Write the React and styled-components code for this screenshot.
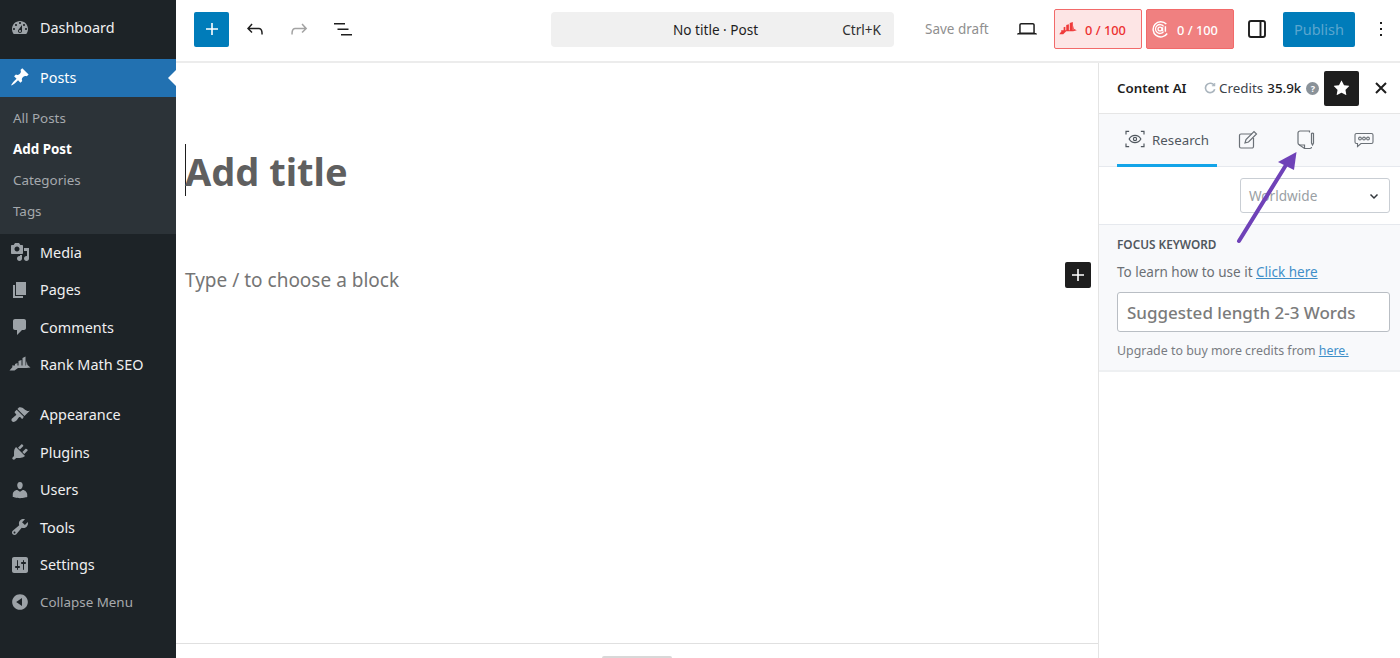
import styled, { createGlobalStyle } from 'styled-components';

const GlobalStyle = createGlobalStyle`
    html, body {
        margin: 0;
        padding: 0;
        background: #fff;
        font-family: 'Noto Sans', 'Open Sans', sans-serif;
    }
    * {
        box-sizing: border-box;
    }
`;

const menuTop = [
    {
        label: 'Media',
        d: 'M13 11V4c0-.55-.45-1-1-1h-1.67L9 1H5L3.67 3H2c-.55 0-1 .45-1 1v7c0 .55.45 1 1 1h10c.55 0 1-.45 1-1zM7 4.5c1.38 0 2.5 1.12 2.5 2.5S8.38 9.5 7 9.5 4.5 8.38 4.5 7 5.62 4.5 7 4.5zM14 6h5v10.5c0 1.38-1.12 2.5-2.5 2.5S14 17.88 14 16.5s1.12-2.5 2.5-2.5c.17 0 .34.02.5.05V9h-3V6zm-4 8.05V13h2v3.5c0 1.38-1.12 2.5-2.5 2.5S7 17.88 7 16.5 8.12 14 9.5 14c.17 0 .34.02.5.05z',
    },
    { label: 'Pages', d: 'M6 15V2h10v13H6zm-1 1h8v2H3V5h2v11z' },
    {
        label: 'Comments',
        d: 'M5 2h9c1.1 0 2 .9 2 2v7c0 1.1-.9 2-2 2h-2l-5 5v-5H5c-1.1 0-2-.9-2-2V4c0-1.1.9-2 2-2z',
    },
    {
        label: 'Rank Math SEO',
        d: 'M12.500 3l3-1.500V11h-3zM8.500 6l3-1v6h-3zM5 9l2.500-1v3H5zM16.500 6l1 4 3 2.500-4 .5H8l-3.500 2.500H-.5l3-3.500-.5-1.500h14z',
    },
];

const menuBottom = [
    {
        label: 'Appearance',
        d: 'M14.48 11.06L7.41 3.99l1.5-1.5c.5-.56 2.3-.47 3.51.32 1.21.8 1.43 1.28 2.91 2.1 1.18.64 2.45 1.26 4.45.85zm-.71.71L6.7 4.7 4.93 6.47c-.39.39-.39 1.02 0 1.41l1.06 1.06c.39.39.39 1.03 0 1.42-.6.6-1.43 1.11-2.21 1.69-.35.26-.7.53-1.01.84C1.43 13.23.99 15.35 2.01 16.36c1.01 1.01 3.13.58 4.47-.77.31-.31.58-.66.84-1.01.58-.78 1.09-1.61 1.69-2.21.39-.39 1.02-.39 1.41 0l1.06 1.06c.39.39 1.02.39 1.41 0z',
    },
    {
        label: 'Plugins',
        d: 'M13.11 4.36L9.87 7.6 8 5.73l3.24-3.24c.35-.34 1.05-.2 1.56.32.52.51.66 1.21.31 1.55zm-8 1.77l.91-1.12 9.01 9.01-1.19.84c-.71.71-2.63 1.16-3.82 1.16H6.14L4.9 17.26c-.59.59-1.54.59-2.12 0-.59-.58-.59-1.53 0-2.12l1.24-1.24v-3.88c0-1.13.4-3.19 1.09-3.89zm7.26 3.97l3.24-3.24c.34-.35 1.04-.21 1.55.31.52.51.66 1.21.31 1.55l-3.24 3.25z',
    },
    {
        label: 'Users',
        d: 'M10 9.25c-2.27 0-2.73-3.44-2.73-3.44C7 4.02 7.82 2 9.97 2c2.16 0 2.98 2.02 2.71 3.81 0 0-.41 3.44-2.68 3.44zm0 2.57L12.72 10c2.39 0 4.52 2.33 4.52 4.53v2.49s-3.65 1.13-7.24 1.13c-3.65 0-7.24-1.13-7.24-1.13v-2.49c0-2.25 1.94-4.48 4.47-4.48z',
    },
    {
        label: 'Tools',
        d: 'M16.68 9.77c-1.34 1.34-3.3 1.67-4.95.99l-5.41 6.52c-.99.99-2.59.99-3.58 0s-.99-2.59 0-3.57l6.52-5.42c-.68-1.65-.35-3.61.99-4.95 1.28-1.28 3.12-1.62 4.72-1.06l-2.89 2.89 2.82 2.82 2.86-2.87c.53 1.58.18 3.39-1.08 4.65zM3.81 16.21c.4.39 1.04.39 1.43 0 .4-.4.4-1.04 0-1.43-.39-.4-1.03-.4-1.43 0-.39.39-.39 1.03 0 1.43z',
    },
    {
        label: 'Settings',
        d: 'M18 16V4c0-1.1-.9-2-2-2H4c-1.1 0-2 .9-2 2v12c0 1.1.9 2 2 2h12c1.1 0 2-.9 2-2zM8 11h1c.55 0 1 .45 1 1s-.45 1-1 1H8v1.5c0 .28-.22.5-.5.5s-.5-.22-.5-.5V13H6c-.55 0-1-.45-1-1s.45-1 1-1h1V5.5c0-.28.22-.5.5-.5s.5.22.5.5V11zm5-2h-1c-.55 0-1-.45-1-1s.45-1 1-1h1V5.5c0-.28.22-.5.5-.5s.5.22.5.5V7h1c.55 0 1 .45 1 1s-.45 1-1 1h-1v5.5c0 .28-.22.5-.5.5s-.5-.22-.5-.5V9z',
    },
];

const subItems = ['All Posts', 'Add Post', 'Categories', 'Tags'];

const Dash = ({ d, size = 20, color = '#9ca2a7' }) => (
    <DashSvg width={size} height={size} viewBox="0 0 20 20" fill={color}>
        <path d={d} />
    </DashSvg>
);

const Icon24 = ({ d, color = '#1e1e1e', size = 24 }) => (
    <svg width={size} height={size} viewBox="0 0 24 24" fill={color}>
        <path d={d} />
    </svg>
);

export default function App() {
    return (
        <>
            <GlobalStyle />
            <Page>
                <AdminMenu>
                    <DashboardItem>
                        <MenuIcon>
                            <Dash d="M3.76 16h12.48c1.1-1.37 1.76-3.11 1.76-5 0-4.42-3.58-8-8-8s-8 3.58-8 8c0 1.89.66 3.63 1.76 5zM10 4c.55 0 1 .45 1 1s-.45 1-1 1-1-.45-1-1 .45-1 1-1zM6 6c.55 0 1 .45 1 1s-.45 1-1 1-1-.45-1-1 .45-1 1-1zm8 0c.55 0 1 .45 1 1s-.45 1-1 1-1-.45-1-1 .45-1 1-1zm-5.37 5.55L12 7v6c0 1.1-.9 2-2 2s-2-.9-2-2c0-.57.24-1.08.63-1.45zM4 10c.55 0 1 .45 1 1s-.45 1-1 1-1-.45-1-1 .45-1 1-1zm12 0c.55 0 1 .45 1 1s-.45 1-1 1-1-.45-1-1 .45-1 1-1zm-5 3c0-.55-.45-1-1-1s-1 .45-1 1 .45 1 1 1 1-.45 1-1z" />
                        </MenuIcon>
                        Dashboard
                    </DashboardItem>
                    <ActiveItem>
                        <MenuIcon>
                            <Dash
                                color="#fff"
                                d="M10.44 3.02l1.82-1.82 6.36 6.35-1.83 1.82c-1.05-.68-2.48-.57-3.41.36l-.75.75c-.92.93-1.04 2.35-.35 3.41l-1.83 1.82-2.41-2.41-2.8 2.79c-.42.42-3.38 2.71-3.8 2.29s1.86-3.39 2.28-3.81l2.79-2.79L4.1 9.36l1.83-1.82c1.05.69 2.48.57 3.4-.36l.75-.75c.93-.92 1.05-2.35.36-3.41z"
                            />
                        </MenuIcon>
                        Posts
                    </ActiveItem>
                    <SubMenu>
                        {subItems.map(item => (
                            <SubItem key={item} current={item === 'Add Post'}>
                                {item}
                            </SubItem>
                        ))}
                    </SubMenu>
                    {menuTop.map(item => (
                        <MenuItem key={item.label}>
                            <MenuIcon>
                                <Dash d={item.d} />
                            </MenuIcon>
                            {item.label}
                        </MenuItem>
                    ))}
                    <MenuSeparator />
                    {menuBottom.map(item => (
                        <MenuItem key={item.label}>
                            <MenuIcon>
                                <Dash d={item.d} />
                            </MenuIcon>
                            {item.label}
                        </MenuItem>
                    ))}
                    <CollapseItem>
                        <MenuIcon>
                            <Dash d="M10 2.16c4.33 0 7.84 3.51 7.84 7.84s-3.51 7.84-7.84 7.84S2.16 14.33 2.16 10 5.71 2.16 10 2.16zm2 11.72V6.12L6.18 9.97z" />
                        </MenuIcon>
                        Collapse Menu
                    </CollapseItem>
                </AdminMenu>

                <Workspace>
                    <TopBar>
                        <InserterButton>
                            <Icon24
                                color="#fff"
                                d="M18 11.2h-5.2V6h-1.6v5.2H6v1.6h5.2V18h1.6v-5.2H18z"
                            />
                        </InserterButton>
                        <ToolGroup>
                            <Icon24 d="M18.3 11.7c-.6-.6-1.4-.9-2.3-.9H6.7l2.9-3.3-1.1-1-4.5 5L8.5 16l1-1-2.7-2.7H16c.5 0 .9.2 1.3.5 1 1 1 3.4 1 4.5v.3h1.500v-.2c0-1.500 0-4.300-1.500-5.700z" />
                            <Icon24
                                color="#a3a3a3"
                                d="M15.6 6.500l-1.100 1 2.900 3.300H8c-.9 0-1.700.3-2.300.9-1.400 1.500-1.400 4.200-1.400 5.600v.2h1.500v-.3c0-1.100 0-3.500 1-4.500.3-.3.7-.5 1.300-.5h9.200L14.500 15l1.100 1.100 4.600-4.600-4.600-5z"
                            />
                            <Icon24 d="M3 6h11v1.500H3V6zm3.500 5.500h11V13h-11v-1.500zM21 17H10v1.500h11V17z" />
                        </ToolGroup>
                        <CommandCenter>
                            <CommandTitle>No title · Post</CommandTitle>
                            <CommandKey>Ctrl+K</CommandKey>
                        </CommandCenter>
                        <SaveDraft>Save draft</SaveDraft>
                        <LaptopSlot>
                            <Icon24 d="M20.500 16h-.7V8c0-1.100-.9-2-2-2H6.200c-1.100 0-2 .9-2 2v8h-.7c-.8 0-1.500.7-1.500 1.500h20c0-.8-.7-1.500-1.500-1.500zM5.700 8c0-.3.2-.5.5-.5h11.600c.3 0 .5.2.5.500v7.600H5.700V8z" />
                        </LaptopSlot>
                        <ScoreBadge>
                            <svg width="18" height="14" viewBox="0 0 20 16" fill="#ef3a3a">
                                <path d="M12 1l3.500-1v9.500H12zM8 3.500l3-1v7H8zM5 6l2-.7v4.200H5zM16 4l1 4 3 1.500-4 1H8L4.500 14H0l2.500-3.500L2 9.500h14z" />
                            </svg>
                            <ScoreText>0 / 100</ScoreText>
                        </ScoreBadge>
                        <ScoreBadge solid>
                            <svg width="18" height="18" viewBox="0 0 20 20" fill="none" stroke="#fff">
                                <path strokeWidth="1.600" d="M17 4.500A8.500 8.500 0 1 0 18 15" />
                                <path strokeWidth="1.400" d="M14 7a5 5 0 1 0 0 6" />
                                <circle cx="10" cy="10" r="2.200" strokeWidth="1.400" />
                                <path strokeWidth="1.600" d="M12.800 8v4.500M16 7v6" />
                            </svg>
                            <ScoreText solid>0 / 100</ScoreText>
                        </ScoreBadge>
                        <SidebarToggle>
                            <svg width="24" height="24" viewBox="0 0 24 24" fill="none" stroke="#1e1e1e" strokeWidth="1.900">
                                <rect x="4" y="4" width="16" height="16" rx="2" />
                                <path d="M15.500 4v16" />
                            </svg>
                        </SidebarToggle>
                        <PublishButton>Publish</PublishButton>
                        <MoreSlot>
                            <Icon24 d="M13 19h-2v-2h2v2zm0-6h-2v-2h2v2zm0-6h-2V5h2v2z" />
                        </MoreSlot>
                    </TopBar>

                    <EditorRow>
                        <Canvas>
                            <CanvasBody>
                                <TitleBlock>
                                    <Title>Add title</Title>
                                </TitleBlock>
                                <ParagraphRow>
                                    <Placeholder>Type / to choose a block</Placeholder>
                                    <BlockAdd>
                                        <Icon24
                                            color="#fff"
                                            d="M18 11.200h-5.200V6h-1.600v5.200H6v1.600h5.200V18h1.600v-5.200H18z"
                                        />
                                    </BlockAdd>
                                </ParagraphRow>
                            </CanvasBody>
                            <StatusBar>
                                <ResizeHandle />
                            </StatusBar>
                        </Canvas>

                        <SidePanel>
                            <PanelHeader>
                                <PanelTitle>Content AI</PanelTitle>
                                <Credits>
                                    <svg width="12" height="12" viewBox="0 0 14 14" fill="none" stroke="#a9b4bd" strokeWidth="1.900">
                                        <path d="M12 4.200A5.500 5.500 0 1 0 12.500 8.500" />
                                        <path d="M12.500 1.200v3.300H9.200" strokeWidth="1.200" />
                                    </svg>
                                    <CreditsLabel>Credits</CreditsLabel>
                                    <CreditsValue>35.9k</CreditsValue>
                                    <HelpDot>?</HelpDot>
                                </Credits>
                                <StarButton>
                                    <Icon24 color="#fff" size={25} d="M11.776 4.454a.25.25 0 01.448 0l2.069 4.192a.25.25 0 00.188.137l4.626.672a.25.25 0 01.139.426l-3.348 3.263a.25.25 0 00-.072.222l.79 4.607a.25.25 0 01-.362.263l-4.138-2.175a.25.25 0 00-.232 0l-4.138 2.175a.25.25 0 01-.363-.263l.79-4.607a.25.25 0 00-.071-.222L4.754 9.881a.25.25 0 01.139-.426l4.626-.672a.25.25 0 00.188-.137l2.069-4.192z" />
                                </StarButton>
                                <CloseSlot>
                                    <svg width="14" height="14" viewBox="0 0 14 14" fill="none" stroke="#1e1e1e" strokeWidth="2">
                                        <path d="M2 2l10 10M12 2L2 12" />
                                    </svg>
                                </CloseSlot>
                            </PanelHeader>

                            <Tabs>
                                <ResearchTab>
                                    <svg width="20" height="18" viewBox="0 0 22 20" fill="none" stroke="#50575e" strokeWidth="1.300">
                                        <path d="M1 5V1.500h3.500M17.500 1.500H21V5M21 15v3.500h-3.500M4.500 18.500H1V15" />
                                        <path d="M4.500 10C6 7.300 8.300 6 11 6s5 1.300 6.500 4c-1.500 2.700-3.800 4-6.500 4s-5-1.300-6.500-4z" />
                                        <circle cx="11" cy="10" r="1.800" />
                                    </svg>
                                    <ResearchLabel>Research</ResearchLabel>
                                </ResearchTab>
                                <TabIcon>
                                    <svg width="20" height="20" viewBox="0 0 20 20" fill="none" stroke="#6b7177" strokeWidth="1.200">
                                        <path d="M14 4H3a1.500 1.500 0 0 0-1.500 1.500v11A1.500 1.500 0 0 0 3 18h11a1.500 1.500 0 0 0 1.500-1.500V8" />
                                        <path d="M7 13l1-3.500 8-8 2.500 2.500-8 8z" />
                                    </svg>
                                </TabIcon>
                                <TabIcon>
                                    <svg width="18" height="20" viewBox="0 0 18 20" fill="none" stroke="#6b7177" strokeWidth="1.200">
                                        <path d="M12.500 2.500V1H3a2 2 0 0 0-2 2v10c0 1 .5 1.500 1.500 2l5 3.500H13a1.500 1.500 0 0 0 1.500-1.500" />
                                        <path d="M2 15h5.500v3.500" />
                                        <path d="M14.500 3.500a1.300 1.300 0 0 1 2 0V13l-1 2-1-2z" />
                                    </svg>
                                </TabIcon>
                                <TabIcon>
                                    <svg width="20" height="16" viewBox="0 0 20 16" fill="none" stroke="#6b7177" strokeWidth="1.100">
                                        <path d="M2.500 1.500h15a1.500 1.500 0 0 1 1.500 1.500v7a1.500 1.500 0 0 1-1.500 1.500H7l-3.500 3v-3h-1A1.500 1.500 0 0 1 1 10V3a1.500 1.500 0 0 1 1.500-1.500z" />
                                        <circle cx="6" cy="6.500" r="1.400" />
                                        <circle cx="10" cy="6.500" r="1.400" />
                                        <circle cx="14" cy="6.500" r="1.400" />
                                    </svg>
                                </TabIcon>
                            </Tabs>

                            <CountryRow>
                                <CountrySelect>
                                    Worldwide
                                    <svg width="12" height="12" viewBox="0 0 12 12" fill="none" stroke="#32373c" strokeWidth="1.500">
                                        <path d="M2.500 4.500L6 8l3.500-3.500" />
                                    </svg>
                                </CountrySelect>
                            </CountryRow>

                            <KeywordPanel>
                                <KeywordLabel>FOCUS KEYWORD</KeywordLabel>
                                <HelpText>
                                    To learn how to use it <PanelLink>Click here</PanelLink>
                                </HelpText>
                                <KeywordInput>Suggested length 2-3 Words</KeywordInput>
                                <UpgradeText>
                                    Upgrade to buy more credits from <PanelLink>here.</PanelLink>
                                </UpgradeText>
                            </KeywordPanel>

                            <Annotation width="70" height="100" viewBox="0 0 70 100">
                                <path d="M6 94L53 18" stroke="#6f42b8" strokeWidth="4" strokeLinecap="round" fill="none" />
                                <path d="M63.500 5L45 15L61 23z" fill="#6f42b8" />
                            </Annotation>
                        </SidePanel>
                    </EditorRow>
                </Workspace>
            </Page>
        </>
    );
}

const DashSvg = styled.svg`
    overflow: visible;
`;

const Page = styled.div`
    display: flex;
    width: 1400px;
    height: 658px;
    overflow: hidden;
`;

const AdminMenu = styled.nav`
    flex: 0 0 176px;
    display: flex;
    flex-direction: column;
    padding-top: 9.500px;
    background: #1d2327;
    color: #f0f0f1;
    font-size: 14.400px;
`;

const MenuItem = styled.div`
    display: flex;
    align-items: center;
    height: 37.500px;
    flex-shrink: 0;
`;

const DashboardItem = styled(MenuItem)`
    padding-bottom: 1px;
`;

const MenuIcon = styled.span`
    flex: 0 0 40px;
    display: flex;
    justify-content: center;
    padding-right: 1px;
`;

const ActiveItem = styled(MenuItem)`
    position: relative;
    margin-top: 12px;
    padding-bottom: 1px;
    background: #2271b1;
    color: #fff;

    &::after {
        content: '';
        position: absolute;
        right: 0;
        top: 50%;
        margin-top: -8px;
        border: 8px solid transparent;
        border-right-color: #fff;
        border-left-width: 0;
    }
`;

const SubMenu = styled.div`
    display: flex;
    flex-direction: column;
    flex-shrink: 0;
    height: 137px;
    padding-top: 6px;
    background: #2c3338;
`;

const SubItem = styled.div`
    height: 31px;
    display: flex;
    align-items: center;
    padding-left: 13px;
    font-size: 13.400px;
    font-weight: ${({ current }) => (current ? 700 : 400)};
    color: ${({ current }) => (current ? '#fff' : '#a5a9ad')};
`;

const MenuSeparator = styled.div`
    height: 12.500px;
    flex-shrink: 0;
`;

const CollapseItem = styled(MenuItem)`
    padding-bottom: 1px;
    color: #a7aaad;
    font-size: 13.400px;
`;

const Workspace = styled.div`
    flex: 1;
    min-width: 0;
    display: flex;
    flex-direction: column;
`;

const TopBar = styled.header`
    flex: 0 0 63px;
    display: flex;
    align-items: center;
    padding: 0 0 3px 18px;
    border-bottom: 2px solid #ececec;
    background: #fff;
`;

const InserterButton = styled.div`
    flex: 0 0 35px;
    height: 35px;
    display: flex;
    align-items: center;
    justify-content: center;
    border-radius: 2px;
    background: #007cba;
`;

const ToolGroup = styled.div`
    flex: 0 0 322px;
    display: flex;
    align-items: center;
    gap: 20px;
    padding-left: 14px;
`;

const CommandCenter = styled.div`
    flex: 0 0 343px;
    height: 35px;
    display: flex;
    align-items: center;
    padding: 0 13px 0 122px;
    border-radius: 4px;
    background: #f0f0f0;
    font-size: 13.600px;
    color: #1e1e1e;
`;

const CommandTitle = styled.span`
    flex: 1;
`;

const CommandKey = styled.span`
    color: #2f2f2f;
`;

const SaveDraft = styled.span`
    margin-left: 31px;
    width: 63px;
    font-size: 13.500px;
    white-space: nowrap;
    color: #8f8f8f;
`;

const LaptopSlot = styled.div`
    display: flex;
    margin-left: 27px;
    margin-right: 15px;
`;

const ScoreBadge = styled.div`
    flex: 0 0 88px;
    height: 40px;
    display: flex;
    align-items: center;
    gap: 8px;
    margin-right: 4px;
    padding-left: 4px;
    border: 1px solid #f26a6a;
    border-radius: 2px;
    background: ${({ solid }) => (solid ? '#f08080' : '#fde5e5')};
`;

const ScoreText = styled.span`
    padding-top: 2px;
    font-size: 12.800px;
    font-weight: 500;
    white-space: nowrap;
    color: ${({ solid }) => (solid ? '#fff' : '#ec2f2f')};
`;

const SidebarToggle = styled.div`
    display: flex;
    margin-left: 7px;
    margin-right: 14px;
`;

const PublishButton = styled.div`
    flex: 0 0 72px;
    height: 35px;
    display: flex;
    align-items: center;
    justify-content: center;
    border-radius: 2px;
    background: #007cba;
    font-size: 14.500px;
    color: #5aa6cf;
`;

const MoreSlot = styled.div`
    display: flex;
    margin-left: 14px;
`;

const EditorRow = styled.div`
    flex: 1;
    min-height: 0;
    display: flex;
`;

const Canvas = styled.main`
    flex: 0 0 922px;
    display: flex;
    flex-direction: column;
`;

const CanvasBody = styled.div`
    flex: 1;
    padding-left: 9px;
    padding-right: 7px;
`;

const TitleBlock = styled.div`
    margin-top: 81px;
    height: 52px;
    display: flex;
    align-items: center;
    padding-top: 2px;
    border-left: 1px solid #1e1e1e;
`;

const Title = styled.h1`
    margin: 0;
    font-size: 38px;
    font-weight: 700;
    line-height: 50px;
    color: #5f5f5f;
    margin-left: -1px;
`;

const ParagraphRow = styled.div`
    display: flex;
    align-items: flex-start;
    justify-content: space-between;
    margin-top: 64px;
`;

const Placeholder = styled.span`
    margin-top: 4px;
    font-size: 19px;
    line-height: 32px;
    color: #757575;
`;

const BlockAdd = styled.div`
    width: 26px;
    height: 26px;
    margin-top: 2px;
    display: flex;
    align-items: center;
    justify-content: center;
    border-radius: 2px;
    background: #1e1e1e;
`;

const StatusBar = styled.div`
    flex: 0 0 15px;
    display: flex;
    justify-content: center;
    align-items: flex-end;
    border-top: 1px solid #e0e0e0;
`;

const ResizeHandle = styled.div`
    width: 70px;
    height: 2px;
    border-radius: 2px 2px 0 0;
    background: #d8d8d8;
`;

const SidePanel = styled.aside`
    position: relative;
    flex: 1;
    min-width: 0;
    display: flex;
    flex-direction: column;
    border-left: 1px solid #e4e4e4;
    background: #fff;
`;

const PanelHeader = styled.div`
    flex: 0 0 51px;
    display: flex;
    align-items: center;
    padding-left: 18px;
    border-bottom: 1px solid #e6e6e6;
`;

const PanelTitle = styled.span`
    width: 87px;
    font-size: 13.300px;
    font-weight: 600;
    color: #1e1e1e;
`;

const Credits = styled.div`
    width: 120px;
    display: flex;
    align-items: center;
    font-size: 13.400px;
    color: #3c434a;
`;

const CreditsLabel = styled.span`
    margin-left: 3px;
`;

const CreditsValue = styled.span`
    margin-left: 4px;
    font-weight: 500;
    color: #1e1e1e;
`;

const HelpDot = styled.span`
    width: 13px;
    height: 13px;
    margin-left: 5px;
    display: flex;
    align-items: center;
    justify-content: center;
    border-radius: 50%;
    background: #8a9299;
    font-size: 9px;
    font-weight: 700;
    color: #fff;
`;

const StarButton = styled.div`
    flex: 0 0 35px;
    height: 35px;
    display: flex;
    align-items: center;
    justify-content: center;
    border-radius: 2px;
    background: #1e1e1e;
`;

const CloseSlot = styled.div`
    display: flex;
    margin-left: 15px;
`;

const Tabs = styled.div`
    flex: 0 0 53px;
    display: flex;
    align-items: stretch;
    padding-left: 18px;
    border-bottom: 1px solid #e6e9ee;
    background: #f8f9fb;
`;

const ResearchTab = styled.div`
    flex: 0 0 100px;
    display: flex;
    align-items: center;
    justify-content: center;
    gap: 7px;
    margin-right: 2px;
    margin-bottom: -1px;
    border-bottom: 3px solid #13a4e8;
    font-size: 13.300px;
    color: #50575e;
`;

const ResearchLabel = styled.span`
    padding-top: 2px;
`;

const TabIcon = styled.div`
    flex: 0 0 58px;
    display: flex;
    align-items: center;
    justify-content: center;
`;

const CountryRow = styled.div`
    flex: 0 0 58px;
    display: flex;
    justify-content: flex-end;
    align-items: flex-start;
    padding: 11px 10px 0 0;
    border-bottom: 1px solid #e6e9ee;
`;

const CountrySelect = styled.div`
    width: 150px;
    height: 35px;
    display: flex;
    align-items: center;
    justify-content: space-between;
    padding: 0 9px 0 8px;
    border: 1px solid #c9ced4;
    border-radius: 3px;
    font-size: 13.600px;
    color: #9a9fa4;
`;

const KeywordPanel = styled.div`
    flex: 0 0 147px;
    padding: 11px 10px 0 18px;
    border-bottom: 2px solid #eef0f2;
    background: #f8f9fb;
`;

const KeywordLabel = styled.div`
    font-size: 11.800px;
    font-weight: 600;
    line-height: 16px;
    color: #50575e;
`;

const HelpText = styled.div`
    margin-top: 10px;
    font-size: 13.500px;
    line-height: 20px;
    color: #6b7075;
`;

const PanelLink = styled.a`
    color: #3f8fc9;
    text-decoration: underline;
`;

const KeywordInput = styled.div`
    height: 40px;
    margin-top: 10px;
    display: flex;
    align-items: center;
    padding-left: 9px;
    border: 1px solid #b9bec4;
    border-radius: 3px;
    background: #fff;
    font-size: 17px;
    font-weight: 500;
    color: #7b7b7b;
`;

const UpgradeText = styled.div`
    margin-top: 9px;
    font-size: 12.400px;
    line-height: 20px;
    color: #787c82;
`;

const Annotation = styled.svg`
    position: absolute;
    left: 134px;
    top: 84px;
`;
